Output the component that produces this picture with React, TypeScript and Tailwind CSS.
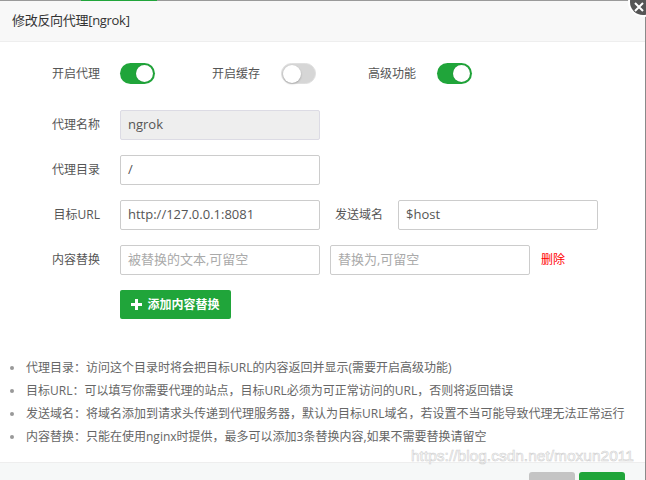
import { useState } from "react";

const font = { fontFamily: '"Open Sans", "Noto Sans CJK SC", sans-serif' };

function Toggle({ on }: { on: boolean }) {
  return on ? (
    <div className="flex h-[21px] w-[35px] items-center justify-end rounded-full bg-[#20a53a] pr-[2px]">
      <div className="h-[17px] w-[17px] rounded-full bg-white shadow-[0_0_1px_rgba(0,0,0,0.3)]" />
    </div>
  ) : (
    <div className="flex h-[21px] w-[35px] items-center rounded-full border border-[#dfdfdf] bg-[#d6d6d6] pl-[1px]">
      <div className="h-[18px] w-[18px] rounded-full bg-white shadow-[0_1px_2px_rgba(0,0,0,0.25)]" />
    </div>
  );
}

function Field({ value, placeholder, disabled }: { value?: string; placeholder?: string; disabled?: boolean }) {
  return (
    <div
      className={
        "flex h-[30px] w-[200px] items-center rounded-[2px] border px-[7px] text-[13px] " +
        (disabled ? "border-[#dcdbe4] bg-[#eeeeee] text-[#555]" : "border-[#cccccc] bg-white text-[#555]")
      }
    >
      {value ? <span>{value}</span> : <span className="text-[#aaa]">{placeholder}</span>}
    </div>
  );
}

function Label({ children }: { children: string }) {
  return <div className="w-[120px] pr-[20px] text-right text-[12px] text-[#555]">{children}</div>;
}

const tips = [
  "代理目录：访问这个目录时将会把目标URL的内容返回并显示(需要开启高级功能)",
  "目标URL：可以填写你需要代理的站点，目标URL必须为可正常访问的URL，否则将返回错误",
  "发送域名：将域名添加到请求头传递到代理服务器，默认为目标URL域名，若设置不当可能导致代理无法正常运行",
  "内容替换：只能在使用nginx时提供，最多可以添加3条替换内容,如果不需要替换请留空",
];

export default function App() {
  const [toggles] = useState([true, false, true]);

  return (
    <div className="relative h-[480px] w-[646px] overflow-hidden bg-white" style={font}>
      <div className="flex h-px">
        <div className="w-[81px] bg-[#9a9a9a]" />
        <div className="w-[76px] bg-[#20a53a]" />
        <div className="grow bg-[#9a9a9a]" />
      </div>
      <div className="flex h-[479px]">
        <div className="flex w-[645px] flex-col">
          <div className="flex h-[41px] items-center border-b border-[#eeeeee] bg-[#f8f8f8] pl-[12px] text-[13px] tracking-[-0.3px] text-[#333]">
            修改反向代理[ngrok]
          </div>

          <div className="flex grow flex-col">
            <div className="mt-[21px] flex h-[21px] items-center text-[12px] text-[#555]">
              <span className="ml-[52px] mr-[20px]">开启代理</span>
              <Toggle on={toggles[0]} />
              <span className="ml-[57px] mr-[21px]">开启缓存</span>
              <Toggle on={toggles[1]} />
              <span className="ml-[52px] mr-[21px]">高级功能</span>
              <Toggle on={toggles[2]} />
            </div>

            <div className="mt-[26px] flex flex-col gap-[15px]">
              <div className="flex items-center">
                <Label>代理名称</Label>
                <Field value="ngrok" disabled />
              </div>
              <div className="flex items-center">
                <Label>代理目录</Label>
                <Field value="/" />
              </div>
              <div className="flex items-center">
                <Label>目标URL</Label>
                <Field value="http://127.0.0.1:8081" />
                <div className="ml-[15px] mr-[15px] text-[12px] text-[#555]">发送域名</div>
                <Field value="$host" />
              </div>
              <div className="flex items-center">
                <Label>内容替换</Label>
                <Field placeholder="被替换的文本,可留空" />
                <div className="ml-[10px]">
                  <Field placeholder="替换为,可留空" />
                </div>
                <span className="ml-[11px] text-[12px] text-[#f00]">删除</span>
              </div>
              <div className="flex">
                <button className="ml-[120px] flex h-[29px] w-[111px] items-center justify-center gap-[5px] rounded-[2px] bg-[#20a53a] text-[12px] font-bold text-white">
                  <svg width="11" height="11" viewBox="0 0 11 11">
                    <path d="M4 0h3v4h4v3H7v4H4V7H0V4h4z" fill="white" />
                  </svg>
                  添加内容替换
                </button>
              </div>
            </div>

            <ul className="mt-[37px] flex flex-col text-[12px] text-[#666]">
              {tips.map((t) => (
                <li key={t} className="flex h-[23px] items-center">
                  <span className="ml-[10px] mr-[12px] h-[4px] w-[4px] rounded-full bg-[#999]" />
                  {t}
                </li>
              ))}
            </ul>

            <div className="mt-auto flex h-[18px] justify-end gap-[4px] border-t border-[#eeeeee] bg-[#f6f8f8] pr-[20px] pt-[9px]">
              <div className="h-[20px] w-[46px] rounded-t-[3px] bg-[#c4c4c4]" />
              <div className="h-[20px] w-[46px] rounded-t-[3px] bg-[#20a53a]" />
            </div>
          </div>
        </div>
        <div className="w-px bg-[#8a8a8a]" />
      </div>

      <div
        className="absolute left-[411px] top-[444px] whitespace-nowrap text-[15.5px] text-white"
        style={{ fontFamily: '"Liberation Sans", Arial, sans-serif', WebkitTextStroke: "0.6px #d0d0d0" }}
      >
        https://blog.csdn.net/moxun2011
      </div>

      <div className="absolute left-[630px] top-[-11px] flex h-[26px] w-[26px] items-center justify-center rounded-full bg-[#555] ring-2 ring-white">
        <svg width="10" height="10" viewBox="0 0 10 10" className="mt-[10px] mr-[8px]">
          <path d="M1 1l8 8M9 1l-8 8" stroke="white" strokeWidth="2" />
        </svg>
      </div>
    </div>
  );
}
